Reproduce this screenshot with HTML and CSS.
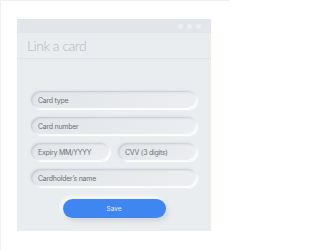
FILE: index.html
```html
<!DOCTYPE html>
<html>
<head>
<meta charset="utf-8">
<link rel="stylesheet" href="styles.css">
</head>
<body>
<div class="page">
  <div class="window">
    <div class="titlebar">
      <span class="dot"></span><span class="dot"></span><span class="dot"></span>
    </div>
    <div class="heading">
      <h1 class="title">Link a card</h1>
    </div>
    <form class="form">
      <div class="field">Card type</div>
      <div class="field">Card number</div>
      <div class="row">
        <div class="field">Expiry MM/YYYY</div>
        <div class="field">CVV (3 digits)</div>
      </div>
      <div class="field">Cardholder’s name</div>
      <div class="actions">
        <button type="button" class="save">Save</button>
      </div>
    </form>
  </div>
</div>
</body>
</html>
```
FILE: styles.css
```css
html, body {
  margin: 0;
  padding: 0;
  background: #ffffff;
}
body {
  font-family: Inter, "Liberation Sans", sans-serif;
}
.page {
  width: 229px;
  height: 250px;
  border-top: 1px solid #eceef1;
  border-left: 1px solid #eceef1;
  padding: 18px 0 0 16px;
  box-sizing: border-box;
}
.window {
  width: 194px;
  height: 212px;
  background: #eaedf0;
  display: flex;
  flex-direction: column;
}
.titlebar {
  height: 14px;
  background: #e2e5e9;
  display: flex;
  align-items: center;
  justify-content: flex-end;
  gap: 4px;
  padding-right: 10px;
}
.dot {
  width: 5px;
  height: 5px;
  border-radius: 50%;
  background: #eceef1;
}
.heading {
  height: 25px;
  border-bottom: 1px solid #e0e3e7;
  display: flex;
  align-items: center;
  padding-left: 10px;
}
.title {
  margin: 0;
  font-family: Lato, Inter, sans-serif;
  font-weight: 300;
  font-size: 14px;
  letter-spacing: -0.5px;
  color: #b2b6bc;
}
.form {
  display: flex;
  flex-direction: column;
  gap: 8px;
  padding: 32px 14px 0 14px;
}
.row {
  display: grid;
  grid-template-columns: 1fr 1fr;
  gap: 8px;
}
.field {
  height: 18px;
  border-radius: 9px;
  background: linear-gradient(135deg, #e2e5e9, #eceef1);
  box-shadow: inset 1px 1px 2px rgba(150, 156, 168, 0.4),
              inset -1px -1px 1px rgba(255, 255, 255, 0.95),
              1px 1px 1px rgba(255, 255, 255, 1),
              -1px -1px 2px rgba(200, 204, 212, 0.35);
  display: flex;
  align-items: center;
  padding-left: 7px;
  font-size: 7px;
  letter-spacing: -0.25px;
  color: #6c7076;
}
.actions {
  display: flex;
  justify-content: center;
  padding-top: 4px;
}
.save {
  width: 103px;
  height: 19px;
  border: none;
  border-radius: 10px;
  background: #3f86f2;
  color: #e6efff;
  font-family: Inter, "Liberation Sans", sans-serif;
  font-size: 6.5px;
  box-shadow: 2px 3px 5px rgba(100, 110, 130, 0.2), -2px -2px 4px rgba(255, 255, 255, 0.9);
}
```
